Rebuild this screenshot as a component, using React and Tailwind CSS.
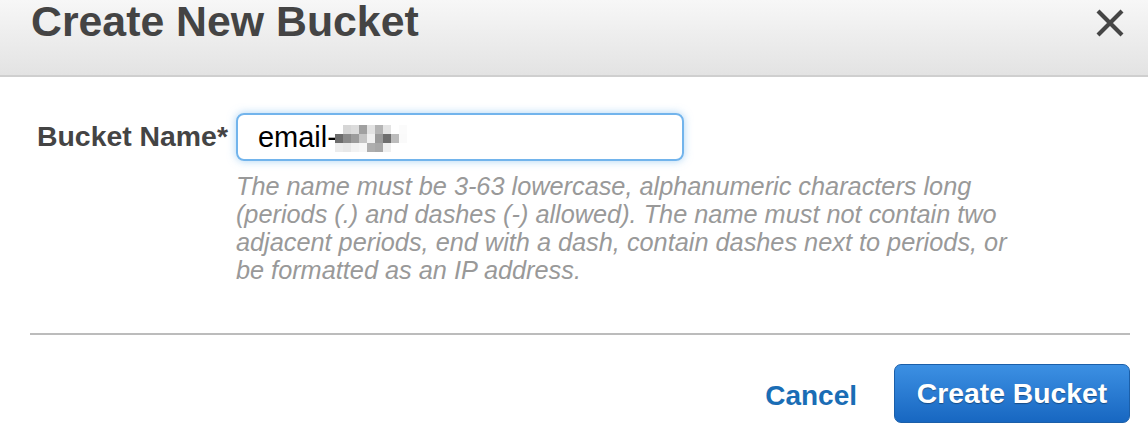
import React, { useState } from "react";

const font = { fontFamily: '"Liberation Sans", Arial, sans-serif' };

const CloseIcon = () => (
  <svg width="32" height="32" viewBox="0 0 32 32" className="text-[#454545]">
    <path
      d="M4 4 L28 28 M28 4 L4 28"
      stroke="currentColor"
      strokeWidth="4.2"
      fill="none"
    />
  </svg>
);

const helpLines = [
  "The name must be 3-63 lowercase, alphanumeric characters long",
  "(periods (.) and dashes (-) allowed). The name must not contain two",
  "adjacent periods, end with a dash, contain dashes next to periods, or",
  "be formatted as an IP address.",
];

// grey levels of the pixelated part of the bucket name
const blurRows = [
  ["#ffffff", "#d6d6d6", "#dcdcdc", "#a0a0a0", "#e2e2e2", "#b4b4b4", "#e4e4e4", "#ffffff", "#fbfbfb"],
  ["#6c6c6c", "#8a8a8a", "#9c9c9c", "#c4c4c4", "#f0f0f0", "#9a9a9a", "#6e6e6e", "#bcbcbc", "#fafafa"],
  ["#ececec", "#e8e8e8", "#f2f2f2", "#f6f6f6", "#aeaeae", "#a8a8a8", "#efefef", "#ffffff", "#ffffff"],
];

const App = () => {
  const [name, setName] = useState("email-");

  return (
    <div className="w-[1148px] h-[434px] bg-white overflow-hidden" style={font}>
      {/* header */}
      <div className="h-[77px] flex justify-between items-start bg-linear-to-b from-[#f7f7f7] to-[#e3e3e3] border-b-2 border-[#cfcfcf]">
        <h1 className="pl-[31px] text-[42.8px] leading-[42px] font-bold text-[#444]">
          Create New Bucket
        </h1>
        <button className="mt-[7px] mr-[22px]">
          <CloseIcon />
        </button>
      </div>

      {/* body */}
      <div className="flex items-start pl-[37px] pt-[36px]">
        <label className="mt-[8px] text-[28.4px] leading-[30px] font-bold text-[#444] shrink-0">
          Bucket Name*
        </label>
        <div className="ml-[8px] flex flex-col">
          <div className="relative">
            <input
              value={name}
              onChange={(e) => setName(e.target.value)}
              className="w-[448px] h-[48px] rounded-[8px] border-2 border-[#72b4ec] shadow-[0_0_8px_rgba(102,175,233,0.55)] pl-[20px] text-[29px] text-black outline-none"
              style={font}
            />
            {/* pixelated blur over the rest of the name */}
            <div className="absolute left-[99px] top-[12px] flex flex-col">
              {blurRows.map((row, r) => (
                <div key={r} className="flex">
                  {row.map((c, i) => (
                    <span
                      key={i}
                      className="w-[8px] h-[9px]"
                      style={{ backgroundColor: c }}
                    />
                  ))}
                </div>
              ))}
            </div>
          </div>
          <p className="mt-[11px] text-[25.3px] leading-[28px] italic text-[#999]">
            {helpLines.map((line) => (
              <span key={line} className="block whitespace-nowrap">
                {line}
              </span>
            ))}
          </p>
        </div>
      </div>

      {/* footer */}
      <div className="ml-[30px] mr-[18px] mt-[49px] border-t-2 border-[#bcbcbc]" />
      <div className="flex justify-end items-center gap-[37px] pr-[18px] pt-[29px]">
        <button className="mt-[5px] text-[28px] font-bold text-[#1a6db5]">Cancel</button>
        <button className="w-[236px] h-[59px] rounded-[7px] border border-[#1b5fa9] bg-linear-to-b from-[#3c90e3] to-[#1767c1] text-white text-[28.3px] font-bold [text-shadow:0_1px_1px_rgba(0,0,0,0.35)]">
          Create Bucket
        </button>
      </div>
    </div>
  );
};

export default App;
